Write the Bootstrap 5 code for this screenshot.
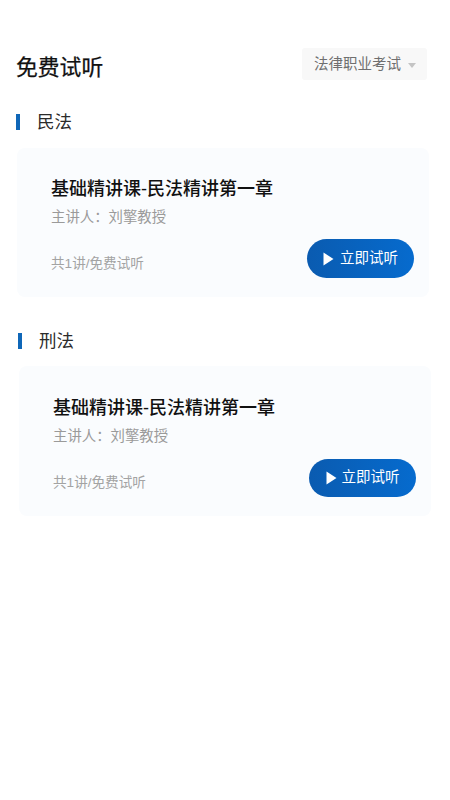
<!DOCTYPE html>
<html lang="zh">
<head>
<meta charset="utf-8">
<link href="https://cdn.jsdelivr.net/npm/bootstrap@5.3.0/dist/css/bootstrap.min.css" rel="stylesheet">
<style>
html,body{height:100%;}
body{background:#fff;font-family:"Liberation Sans","Noto Sans CJK SC",sans-serif;color:#111;overflow:hidden;}
.page-wrap{padding:48px 23px 0 16px;width:450px;}
.page-head{height:32px;margin-bottom:30px;}
.page-title{font-size:21.8px;line-height:38px;font-weight:400;-webkit-text-stroke:.25px #111;margin:8px 0 0;color:#111;}
.cat-picker{width:125px;height:32px;background:#f8f8f8;border-radius:3px;color:#6f6f6f;font-size:14.5px;padding:2px 0 0 12px;border:0;}
.cat-caret{width:0;height:0;border-left:4px solid transparent;border-right:4px solid transparent;border-top:5px solid #c4c4c4;margin-left:7px;}
.sec-head{height:24px;margin-bottom:14px;}
.sec-bar{width:3.5px;height:16px;background:#0f67b8;}
.sec-name{font-size:17.5px;line-height:24px;color:#2b2b2b;margin-left:17.5px;font-weight:400;}
.course-box{background:#fafcfe;border:0;border-radius:8px;width:412px;height:149px;padding:29px 15px 19px 34px;margin-left:1px;}
.course-name{font-size:18px;line-height:24px;font-weight:500;color:#111;margin:0 0 5px;}
.course-teacher{font-size:14.4px;line-height:22px;color:#9a9a9a;margin:0;}
.course-foot{margin-top:11px;}
.course-meta{font-size:13.6px;line-height:20px;color:#a3a3a3;margin-top:10px;}
.try-btn{width:107px;height:39px;border-radius:20px;background:linear-gradient(90deg,#0a5bb0,#066bce);color:#fff;font-size:14.5px;border:0;padding:0;}
.try-btn:hover{background:linear-gradient(90deg,#0a5bb0,#066bce);color:#fff;}
.try-btn svg{margin-right:6px;}
.sec-one{margin-bottom:32px;}
.sec-two{margin-left:2px;margin-right:-2px;}
.sec-two .sec-head{margin-bottom:13px;}
.sec-two .course-box{height:150px;padding-top:30px;}
.sec-two .course-foot{margin-top:12px;}
.sec-two .try-btn{height:38px;}
.sec-two .try-btn svg{margin-right:5px;}
</style>
</head>
<body>
<div class="page-wrap">
  <div class="page-head d-flex justify-content-between align-items-center">
    <h1 class="page-title">免费试听</h1>
    <div class="cat-picker d-flex align-items-center">法律职业考试<span class="cat-caret"></span></div>
  </div>

  <section class="sec-one">
    <div class="sec-head d-flex align-items-center"><span class="sec-bar"></span><h2 class="sec-name mb-0">民法</h2></div>
    <div class="card course-box">
      <h3 class="course-name">基础精讲课-民法精讲第一章</h3>
      <p class="course-teacher">主讲人&#xFF1A;刘擎教授</p>
      <div class="course-foot d-flex justify-content-between align-items-center">
        <span class="course-meta">共1讲/免费试听</span>
        <button class="btn try-btn d-flex align-items-center justify-content-center" type="button"><svg width="11" height="14" viewBox="0 0 11 14"><path d="M0.5 0.5 L10.5 7 L0.5 13.5 Z" fill="#fff"/></svg>立即试听</button>
      </div>
    </div>
  </section>

  <section class="sec-two">
    <div class="sec-head d-flex align-items-center"><span class="sec-bar"></span><h2 class="sec-name mb-0">刑法</h2></div>
    <div class="card course-box">
      <h3 class="course-name">基础精讲课-民法精讲第一章</h3>
      <p class="course-teacher">主讲人&#xFF1A;刘擎教授</p>
      <div class="course-foot d-flex justify-content-between align-items-center">
        <span class="course-meta">共1讲/免费试听</span>
        <button class="btn try-btn d-flex align-items-center justify-content-center" type="button"><svg width="11" height="14" viewBox="0 0 11 14"><path d="M0.5 0.5 L10.5 7 L0.5 13.5 Z" fill="#fff"/></svg>立即试听</button>
      </div>
    </div>
  </section>
</div>
<script src="https://cdn.jsdelivr.net/npm/bootstrap@5.3.0/dist/js/bootstrap.bundle.min.js"></script>
</body>
</html>
